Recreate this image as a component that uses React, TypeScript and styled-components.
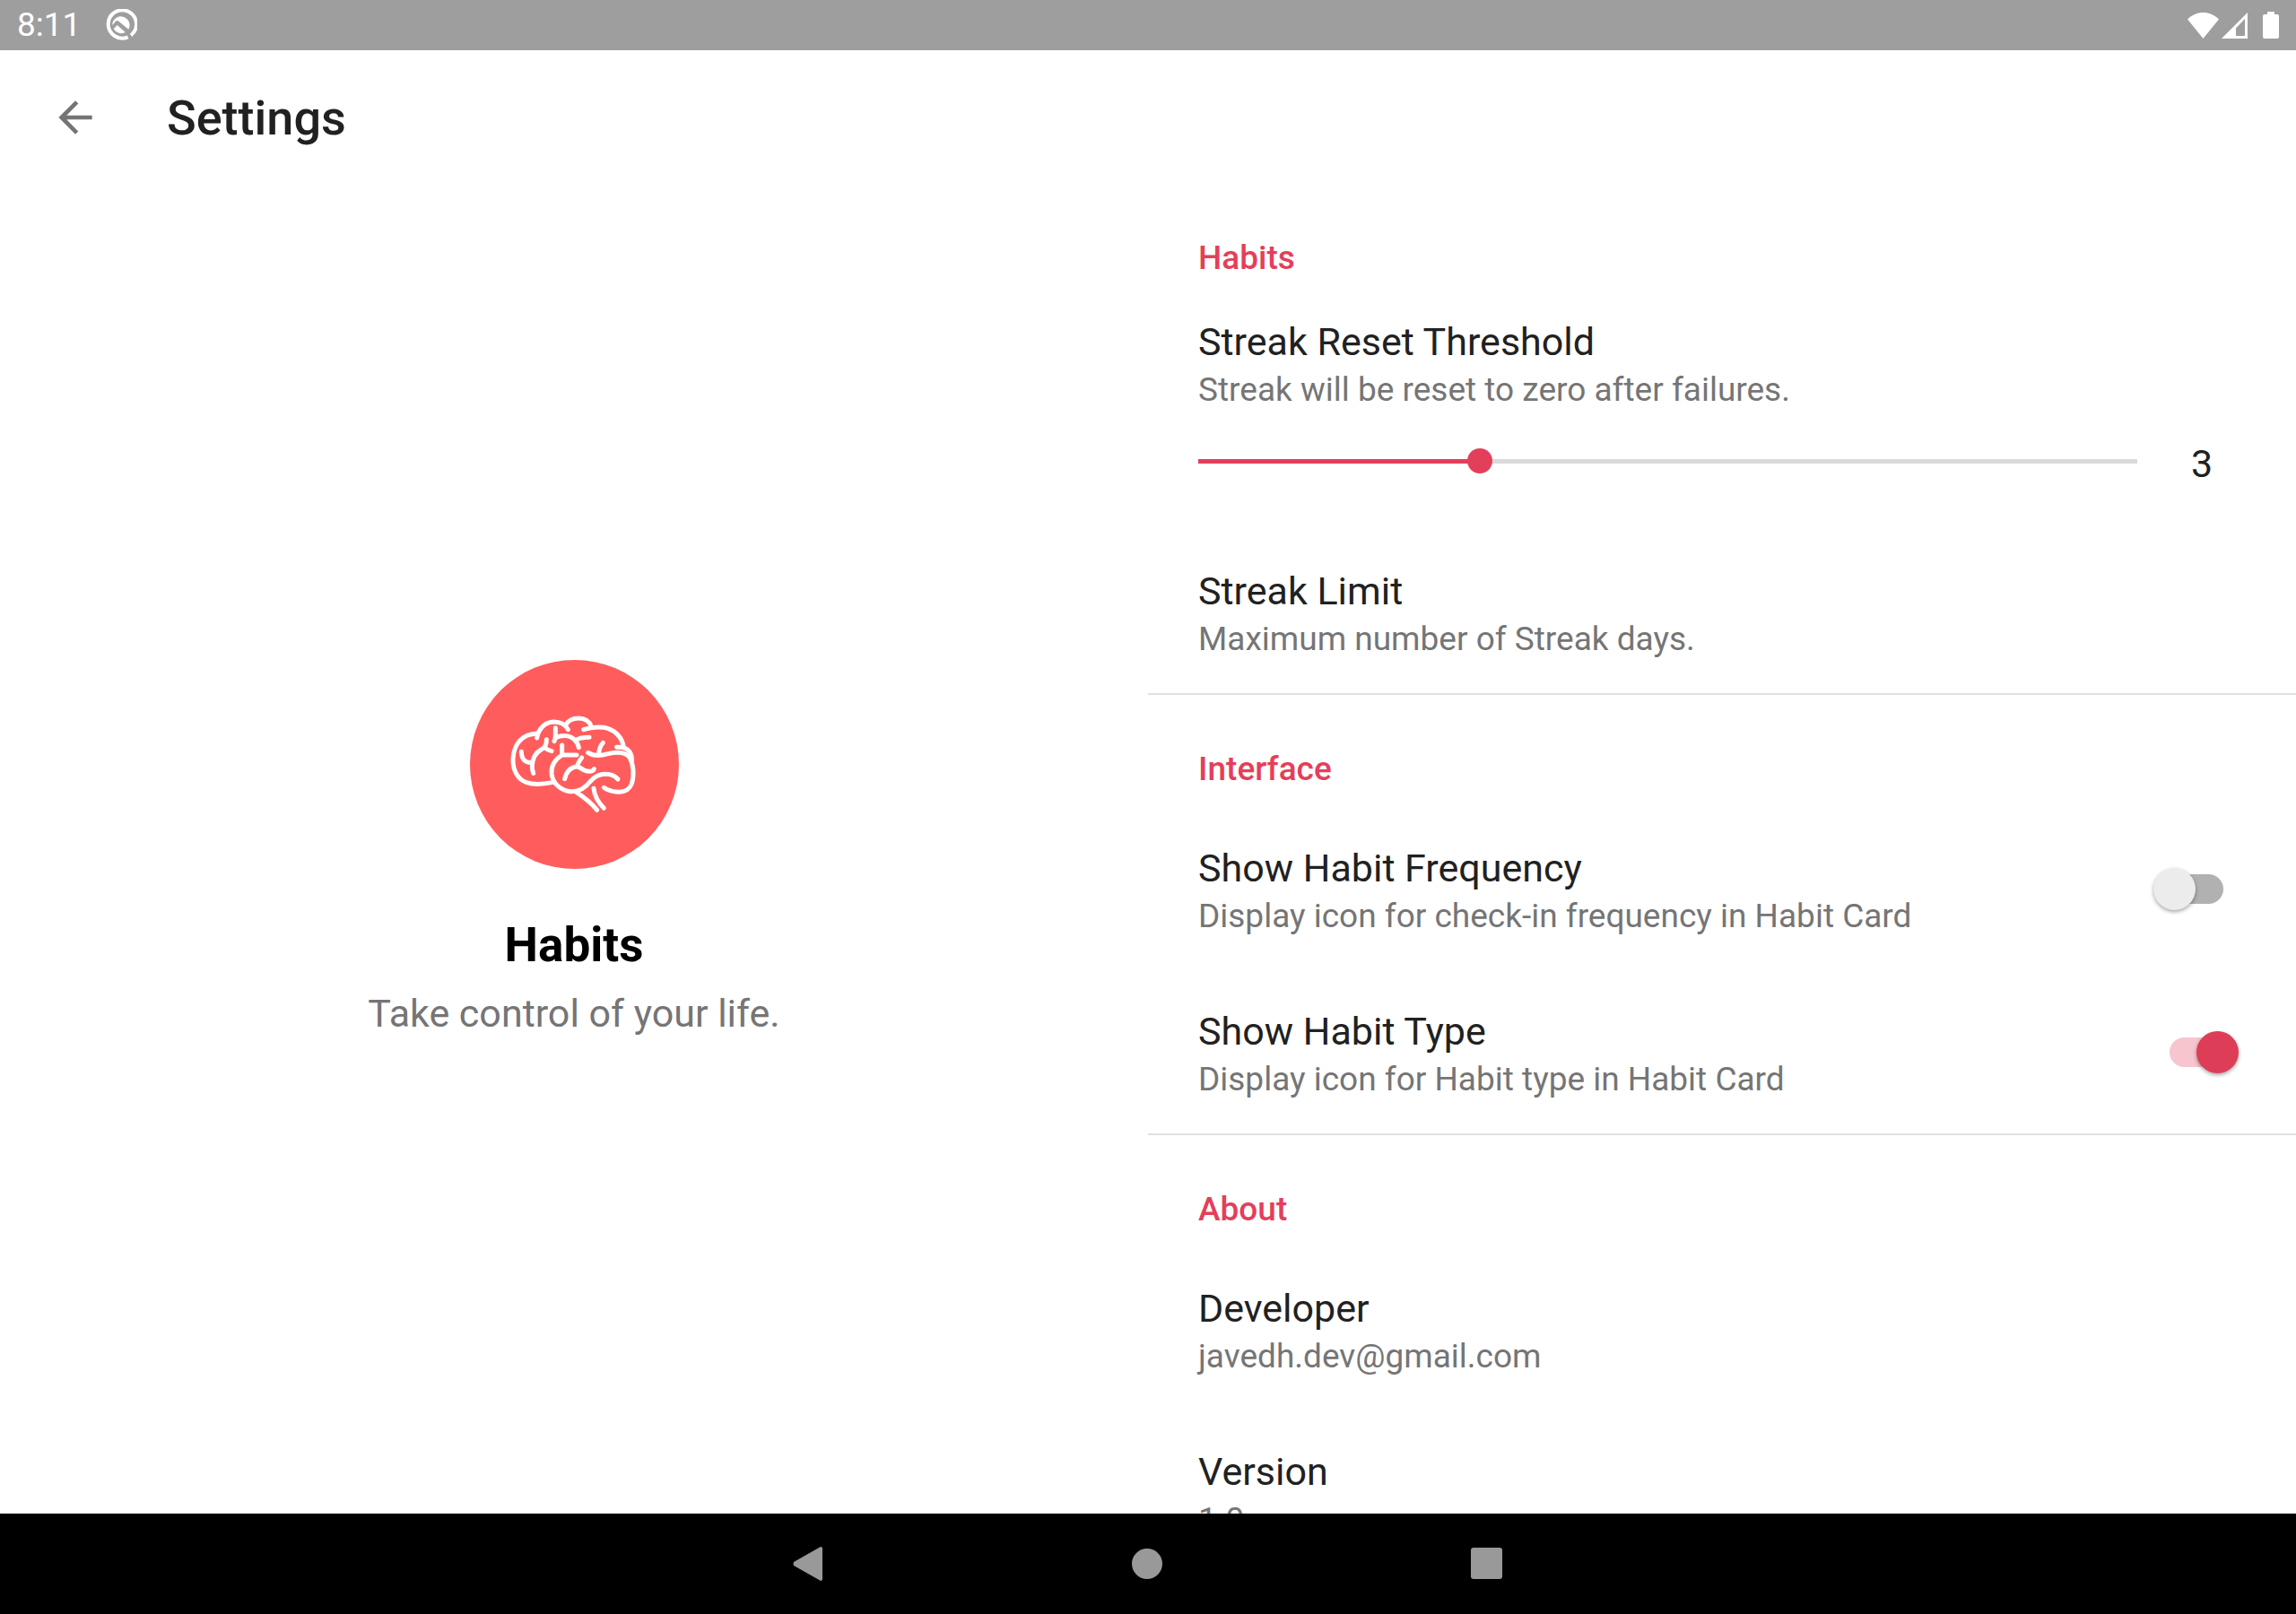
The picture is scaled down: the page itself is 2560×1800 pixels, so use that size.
import React, { useId, useState } from "react";
import styled, { createGlobalStyle, ThemeProvider } from "styled-components";

const theme = {
  accent: "#e43f5a",
  accentSoft: "#f7c5ce",
  ink: "#212121",
  muted: "#757575",
  line: "#e0e0e0",
  logo: "#ff5d5d",
  gutter: "56px",
  trailing: "64px",
};

const GlobalStyle = createGlobalStyle`
  *, *::before, *::after { box-sizing: border-box; }
  body {
    margin: 0;
    background: #ffffff;
    color: ${theme.ink};
    font-family: Roboto, "Noto Sans", "Liberation Sans", sans-serif;
  }
  h1, h2, h3, p { margin: 0; }
`;

const Screen = styled.div`
  display: flex;
  flex-direction: column;
  height: 100vh;
`;

const StatusBar = styled.header`
  flex: none;
  display: flex;
  align-items: center;
  justify-content: space-between;
  height: 56px;
  padding: 0 19px;
  background: #9e9e9e;
  color: #ffffff;
  font-size: 37px;
  line-height: 58px;
`;

const StatusGroup = styled.div<{ $gap: number }>`
  display: flex;
  align-items: center;
  gap: ${(p) => p.$gap}px;

  svg { display: block; }
`;

const AppBar = styled.div`
  flex: none;
  display: flex;
  align-items: center;
  gap: 74px;
  height: 149px;
  padding: 0 ${(p) => p.theme.gutter};
`;

const IconButton = styled.button`
  display: block;
  width: 56px;
  height: 56px;
  padding: 0;
  border: 0;
  background: none;
  color: ${(p) => p.theme.muted};
  cursor: pointer;

  svg { display: block; }
`;

const PageTitle = styled.h1`
  padding-top: 2px;
  font-size: 54px;
  line-height: 64px;
  font-weight: 500;
`;

const Columns = styled.main`
  flex: 1;
  min-height: 0;
  display: grid;
  grid-template-columns: 1fr 1fr;
`;

const Brand = styled.section`
  display: flex;
  flex-direction: column;
  align-items: center;
  justify-content: center;
`;

const BrandName = styled.h2`
  margin-top: 53px;
  color: #000000;
  font-size: 53px;
  line-height: 64px;
  font-weight: 700;
`;

const Tagline = styled.p`
  margin-top: 16px;
  color: ${(p) => p.theme.muted};
  font-size: 43px;
  line-height: 56px;
`;

const Preferences = styled.section`
  min-height: 0;
  overflow-y: auto;
  scrollbar-width: none;
`;

const Category = styled.section`
  & + & { border-top: 2px solid ${(p) => p.theme.line}; }
`;

const CategoryTitle = styled.h2`
  padding: 61px ${(p) => p.theme.gutter} 20px;
  color: ${(p) => p.theme.accent};
  font-size: 37px;
  line-height: 44px;
  font-weight: 500;
`;

const Row = styled.div`
  display: flex;
  align-items: center;
  justify-content: space-between;
  padding: 38px ${(p) => p.theme.trailing} 38px ${(p) => p.theme.gutter};
`;

const SliderBlock = styled.div`
  padding: 21px ${(p) => p.theme.trailing} 46px ${(p) => p.theme.gutter};
`;

const SliderLine = styled.div`
  display: flex;
  align-items: flex-start;
  gap: 17px;
  margin: 32px 0 0 -14px;
`;

const Slider = styled.input<{ $fill: number }>`
  appearance: none;
  flex: 1;
  min-width: 0;
  height: 50px;
  margin: 0;
  background: linear-gradient(
      to right,
      ${(p) => p.theme.accent} ${(p) => p.$fill}%,
      #dadada ${(p) => p.$fill}%
    )
    center / calc(100% - 28px) 5px no-repeat;
  cursor: pointer;

  &::-webkit-slider-thumb {
    appearance: none;
    width: 28px;
    height: 28px;
    border-radius: 50%;
    background: ${(p) => p.theme.accent};
  }
`;

const SliderValue = styled.output`
  width: 82px;
  font-size: 43px;
  line-height: 56px;
  text-align: center;
`;

const Labels = styled.div`
  display: flex;
  flex-direction: column;
  gap: 4px;
  padding-top: 2px;
`;

const Label = styled.label`
  font-size: 43px;
  line-height: 56px;
  font-weight: 400;
`;

const Summary = styled.p`
  color: ${(p) => p.theme.muted};
  font-size: 37px;
  line-height: 44px;
`;

const Switch = styled.input`
  appearance: none;
  flex: none;
  display: flex;
  align-items: center;
  width: 95px;
  height: 48px;
  margin: 0;
  background: linear-gradient(#b1b1b1, #b1b1b1) center / 26px 33px no-repeat,
    radial-gradient(circle at center, #b1b1b1 16px, transparent 17px) 18px center / 33px 33px no-repeat,
    radial-gradient(circle at center, #b1b1b1 16px, transparent 17px) 45px center / 33px 33px no-repeat;
  cursor: pointer;

  &::before {
    content: "";
    width: 47px;
    height: 47px;
    border-radius: 50%;
    background: #ececec;
    box-shadow: 0 2px 4px rgba(0, 0, 0, 0.35);
  }

  &:checked {
    justify-content: flex-end;
    background: linear-gradient(${(p) => p.theme.accentSoft}, ${(p) => p.theme.accentSoft}) center / 26px 33px no-repeat,
      radial-gradient(circle at center, ${(p) => p.theme.accentSoft} 16px, transparent 17px) 18px center / 33px 33px no-repeat,
      radial-gradient(circle at center, ${(p) => p.theme.accentSoft} 16px, transparent 17px) 45px center / 33px 33px no-repeat;
  }

  &:checked::before { background: #de3d58; }
`;

const NavBar = styled.nav`
  flex: none;
  display: flex;
  justify-content: center;
  height: 112px;
  background: #000000;
`;

const NavButton = styled.button`
  display: flex;
  align-items: center;
  justify-content: center;
  width: 378px;
  padding: 0;
  border: 0;
  background: none;
  color: #999999;
  cursor: pointer;
`;

const BackArrow = () => (
  <svg width="56" height="56" viewBox="0 0 24 24" fill="currentColor" aria-hidden="true">
    <path d="M20 11H7.83l5.59-5.59L12 4l-8 8 8 8 1.41-1.41L7.83 13H20v-2z" />
  </svg>
);

const QuickMark = () => (
  <svg width="36" height="36" viewBox="350 30 108 108" fill="none" aria-hidden="true">
    <path d="M437 118A47 47 0 1 0 427 124" stroke="#fff" strokeWidth="12" />
    <path d="M375 79A29 29 0 1 1 429 98L396 71Q390 67 385 72L376 84Z" fill="#fff" />
    <path d="M379 97L391 84L418 108A29 29 0 0 1 379 97Z" fill="#fff" />
  </svg>
);

const Wifi = () => (
  <svg width="35" height="29" viewBox="0 0 35 29" fill="#fff" aria-hidden="true">
    <path d="M0 7.500C5 2.500 11 0 17.500 0S30 2.500 35 7.500L17.500 29Z" />
  </svg>
);

const Signal = () => (
  <svg width="29" height="29" viewBox="0 0 29 29" fill="#fff" fillRule="evenodd" aria-hidden="true">
    <path d="M29 0V29H0ZM26 7L16 17.500V26H26Z" />
  </svg>
);

const Battery = () => (
  <svg width="18" height="30" viewBox="0 0 18 30" fill="#fff" aria-hidden="true">
    <path d="M5 0H13V3H16Q18 3 18 5V28Q18 30 16 30H2Q0 30 0 28V5Q0 3 2 3H5Z" />
  </svg>
);

const BrainLogo = () => (
  <svg width="233" height="233" viewBox="39 48 699 699" role="img" aria-label="Habits logo">
    <circle cx="388.500" cy="397.500" r="349.500" fill={theme.logo} />
    <g fill="none" stroke="#fff" strokeWidth="15" strokeLinecap="round" strokeLinejoin="round">
      <path d="M318 457C285 464 252 466 228 458C197 447 182 415 183 380C185 330 212 296 264 294" />
      <path d="M263 309C268 277 291 256 319 255C343 255 359 265 367 281" />
      <path d="M359 266C368 250 383 243 402 243C424 243 439 254 445 271" />
      <path d="M419 281C442 273 465 271 487 274C522 280 549 306 553 341" />
      <path d="M530 340C561 337 579 351 581 382" />
      <path d="M434 358C454 372 476 369 501 362C535 354 561 357 574 376C586 398 589 435 580 462C570 489 543 493 515 487C503 484 493 481 487 475" />
      <path d="M484 325C473 337 470 350 470 366" />
      <path d="M396 366H347C325 380 310 400 312 428C315 459 340 483 373 488C404 491 426 475 442 454C459 434 480 426 506 431C519 434 528 440 534 447" />
      <path d="M347 366V333" />
      <path d="M325 275V300Q326 312 321 320" />
      <path d="M325 308C342 301 362 300 376 306C392 314 400 326 403 341" />
      <path d="M392 318C402 309 419 307 438 307" />
      <path d="M295 314C296 332 290 342 277 348C253 362 247 382 247 405Q247 417 251 427" />
      <path d="M289 341C296 348 303 351 312 353" />
      <path d="M211 355C212 382 224 394 248 391" />
      <path d="M413 375Q403 387 397 404C375 407 361 423 356 446" />
      <path d="M397 404Q409 409 419 416C435 423 450 423 454 413" />
      <path d="M394 490C419 506 443 524 464 550" />
      <path d="M453 478C456 508 469 526 487 544" />
    </g>
  </svg>
);

type SwitchRowProps = { title: string; summary: string; initial: boolean };

const SwitchRow = ({ title, summary, initial }: SwitchRowProps) => {
  const id = useId();
  const [on, setOn] = useState(initial);
  return (
    <Row>
      <Labels>
        <Label htmlFor={id}>{title}</Label>
        <Summary id={`${id}-summary`}>{summary}</Summary>
      </Labels>
      <Switch
        id={id}
        type="checkbox"
        role="switch"
        aria-describedby={`${id}-summary`}
        checked={on}
        onChange={(e) => setOn(e.target.checked)}
      />
    </Row>
  );
};

const TextRow = ({ title, summary }: { title: string; summary: string }) => (
  <Row>
    <Labels>
      <Label as="h3">{title}</Label>
      <Summary>{summary}</Summary>
    </Labels>
  </Row>
);

const StreakSlider = () => {
  const id = useId();
  const [value, setValue] = useState(3);
  return (
    <SliderBlock>
      <Labels>
        <Label htmlFor={id}>Streak Reset Threshold</Label>
        <Summary>Streak will be reset to zero after failures.</Summary>
      </Labels>
      <SliderLine>
        <Slider
          id={id}
          type="range"
          min={0}
          max={10}
          value={value}
          $fill={value * 10}
          onChange={(e) => setValue(Number(e.target.value))}
        />
        <SliderValue htmlFor={id}>{value}</SliderValue>
      </SliderLine>
    </SliderBlock>
  );
};

export default function App() {
  return (
    <ThemeProvider theme={theme}>
      <GlobalStyle />
      <Screen>
        <StatusBar>
          <StatusGroup $gap={27}>
            <span>8:11</span>
            <QuickMark />
          </StatusGroup>
          <StatusGroup $gap={3}>
            <Wifi />
            <StatusGroup $gap={17}>
              <Signal />
              <Battery />
            </StatusGroup>
          </StatusGroup>
        </StatusBar>

        <AppBar>
          <IconButton type="button" aria-label="Back">
            <BackArrow />
          </IconButton>
          <PageTitle>Settings</PageTitle>
        </AppBar>

        <Columns>
          <Brand>
            <BrainLogo />
            <BrandName>Habits</BrandName>
            <Tagline>Take control of your life.</Tagline>
          </Brand>

          <Preferences>
            <Category>
              <CategoryTitle>Habits</CategoryTitle>
              <StreakSlider />
              <TextRow title="Streak Limit" summary="Maximum number of Streak days." />
            </Category>
            <Category>
              <CategoryTitle>Interface</CategoryTitle>
              <SwitchRow
                title="Show Habit Frequency"
                summary="Display icon for check-in frequency in Habit Card"
                initial={false}
              />
              <SwitchRow title="Show Habit Type" summary="Display icon for Habit type in Habit Card" initial />
            </Category>
            <Category>
              <CategoryTitle>About</CategoryTitle>
              <TextRow title="Developer" summary="javedh.dev@gmail.com" />
              <TextRow title="Version" summary="1.0" />
            </Category>
          </Preferences>
        </Columns>

        <NavBar>
          <NavButton type="button" aria-label="Back">
            <svg width="36" height="38" viewBox="0 0 36 38" fill="currentColor" aria-hidden="true">
              <path d="M31 0Q33 0 33 2V36Q33 38 31 38L1 21Q0 19 1 17Z" />
            </svg>
          </NavButton>
          <NavButton type="button" aria-label="Home">
            <svg width="36" height="36" viewBox="0 0 36 36" fill="currentColor" aria-hidden="true">
              <circle cx="17" cy="18" r="17" />
            </svg>
          </NavButton>
          <NavButton type="button" aria-label="Recent apps">
            <svg width="36" height="36" viewBox="1 0 36 36" fill="currentColor" aria-hidden="true">
              <rect width="35" height="35" x="1" rx="3" />
            </svg>
          </NavButton>
        </NavBar>
      </Screen>
    </ThemeProvider>
  );
}
